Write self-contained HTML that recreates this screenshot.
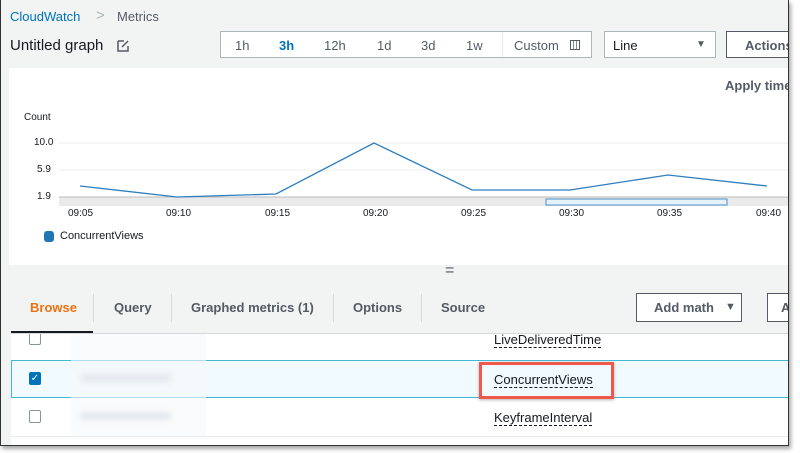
<!DOCTYPE html>
<html><head><style>
body{margin:0;width:800px;height:453px;background:#fff;font-family:"Liberation Sans",sans-serif;position:relative;overflow:hidden}
.frame{position:absolute;left:0;top:0;width:787px;height:445px;border:1.5px solid #333;border-top:none;background:#f2f3f3;overflow:hidden;box-shadow:2px 3px 4px rgba(0,0,0,.35)}
.a{position:absolute;white-space:nowrap}
</style></head><body>
<div class="frame">
<div class="a" style="left:9px;top:9px;font-size:13px;color:#0073bb">CloudWatch</div>
<div class="a" style="left:95px;top:7px;font-size:15px;color:#aab7b8">&gt;</div>
<div class="a" style="left:116px;top:9px;font-size:13px;color:#545b64">Metrics</div>
<div class="a" style="left:9px;top:37px;font-size:15px;color:#16191f">Untitled graph</div>
<svg class="a" style="left:116px;top:39px" width="13" height="13"><path d="M1 2h6M1 2v10h10V7" stroke="#545b64" stroke-width="1.5" fill="none"/><path d="M5 8l6-6" stroke="#545b64" stroke-width="1.5"/></svg>
<div class="a" style="left:219px;top:31px;width:372px;height:27px;background:#fff;border:1px solid #aab7b8;box-sizing:border-box"></div>
<div class="a" style="left:234px;top:38px;font-size:13px;color:#545b64">1h</div>
<div class="a" style="left:278px;top:38px;font-size:13px;color:#0073bb;font-weight:bold">3h</div>
<div class="a" style="left:323px;top:38px;font-size:13px;color:#545b64">12h</div>
<div class="a" style="left:376px;top:38px;font-size:13px;color:#545b64">1d</div>
<div class="a" style="left:420px;top:38px;font-size:13px;color:#545b64">3d</div>
<div class="a" style="left:465px;top:38px;font-size:13px;color:#545b64">1w</div>
<div class="a" style="left:501px;top:32px;width:1px;height:25px;background:#eaeded"></div>
<div class="a" style="left:513px;top:38px;font-size:13px;color:#545b64">Custom</div>
<div class="a" style="left:569px;top:40px;width:10px;height:10px;border:1px solid #545b64;box-sizing:border-box;background:repeating-linear-gradient(90deg,#fff 0 2px,#888 2px 3px)"></div>
<div class="a" style="left:603px;top:31px;width:112px;height:27px;background:#fff;border:1px solid #aab7b8;box-sizing:border-box"></div>
<div class="a" style="left:612px;top:38px;font-size:13px;color:#16191f">Line</div>
<div class="a" style="left:695px;top:39px;font-size:10px;color:#545b64">▼</div>
<div class="a" style="left:725px;top:31px;width:80px;height:27px;background:#fff;border:1px solid #545b64;box-sizing:border-box"></div>
<div class="a" style="left:744px;top:38px;font-size:13px;color:#545b64;font-weight:bold">Actions</div>
<div class="a" style="left:8px;top:68px;width:790px;height:197px;background:#fff"></div>
<div class="a" style="left:724px;top:78px;font-size:13px;color:#545b64;font-weight:bold">Apply time</div>
<div class="a" style="left:23px;top:112px;font-size:10px;color:#16191f">Count</div>
<div class="a" style="left:33px;top:137px;font-size:10px;color:#16191f">10.0</div>
<div class="a" style="left:36px;top:164px;font-size:10px;color:#16191f">5.9</div>
<div class="a" style="left:36px;top:191px;font-size:10px;color:#16191f">1.9</div>
<svg class="a" style="left:0;top:0" width="800" height="260">
<line x1="58" y1="143" x2="790" y2="143" stroke="#eee"/>
<line x1="58" y1="170" x2="790" y2="170" stroke="#eee"/>
<rect x="58" y="197" width="732" height="9" fill="#eaeaea"/>
<line x1="58" y1="197" x2="790" y2="197" stroke="#bbb"/>
<rect x="545" y="199" width="181" height="6" fill="#e6f3fc" stroke="#4a90c8"/>
<polyline points="79,186 176,197 275,194 373,143 471,190 569,190 667,175 766,186" fill="none" stroke="#2e7fc0" stroke-width="1.3"/>
</svg>
<div class="a" style="left:67px;top:208px;font-size:10px;color:#16191f">09:05</div>
<div class="a" style="left:165px;top:208px;font-size:10px;color:#16191f">09:10</div>
<div class="a" style="left:264px;top:208px;font-size:10px;color:#16191f">09:15</div>
<div class="a" style="left:362px;top:208px;font-size:10px;color:#16191f">09:20</div>
<div class="a" style="left:460px;top:208px;font-size:10px;color:#16191f">09:25</div>
<div class="a" style="left:558px;top:208px;font-size:10px;color:#16191f">09:30</div>
<div class="a" style="left:656px;top:208px;font-size:10px;color:#16191f">09:35</div>
<div class="a" style="left:755px;top:208px;font-size:10px;color:#16191f">09:40</div>
<div class="a" style="left:43px;top:231px;width:10px;height:11px;border-radius:3px;background:#1f77b4"></div>
<div class="a" style="left:59px;top:230px;font-size:11px;color:#16191f">ConcurrentViews</div>
<div class="a" style="left:444px;top:262px;font-size:16px;color:#545b64">=</div>
<div class="a" style="left:29px;top:300px;font-size:13px;color:#ec7211;font-weight:bold">Browse</div>
<div class="a" style="left:10px;top:331px;width:82px;height:2px;background:#16191f"></div>
<div class="a" style="left:10px;top:333px;width:790px;height:1px;background:#d5dbdb"></div>
<div class="a" style="left:92px;top:294px;width:1px;height:28px;background:#d5dbdb"></div>
<div class="a" style="left:113px;top:300px;font-size:13px;color:#545b64;font-weight:bold">Query</div>
<div class="a" style="left:170px;top:294px;width:1px;height:28px;background:#d5dbdb"></div>
<div class="a" style="left:190px;top:300px;font-size:13px;color:#545b64;font-weight:bold">Graphed metrics (1)</div>
<div class="a" style="left:332px;top:294px;width:1px;height:28px;background:#d5dbdb"></div>
<div class="a" style="left:352px;top:300px;font-size:13px;color:#545b64;font-weight:bold">Options</div>
<div class="a" style="left:420px;top:294px;width:1px;height:28px;background:#d5dbdb"></div>
<div class="a" style="left:440px;top:300px;font-size:13px;color:#545b64;font-weight:bold">Source</div>
<div class="a" style="left:635px;top:293px;width:106px;height:29px;background:#fff;border:1px solid #545b64;box-sizing:border-box"></div>
<div class="a" style="left:653px;top:300px;font-size:13px;color:#545b64;font-weight:bold">Add math</div>
<div class="a" style="left:724px;top:301px;font-size:11px;color:#545b64">▼</div>
<div class="a" style="left:766px;top:293px;width:40px;height:29px;background:#fff;border:1px solid #545b64;box-sizing:border-box"></div>
<div class="a" style="left:780px;top:300px;font-size:13px;color:#545b64;font-weight:bold">A</div>
<div class="a" style="left:10px;top:334px;width:790px;height:112px;background:#fff"></div>
<div class="a" style="left:10px;top:360px;width:790px;height:38px;background:#f1faff;border:1px solid #44b9d6;box-sizing:border-box"></div>
<div class="a" style="left:10px;top:436px;width:790px;height:1px;background:#eaeded"></div>
<div class="a" style="left:70px;top:334px;width:135px;height:102px;background:#f6f8fa;opacity:.6"></div>
<div class="a" style="left:80px;top:374px;width:90px;height:8px;background:#e3e8ee;filter:blur(3px)"></div>
<div class="a" style="left:80px;top:412px;width:90px;height:8px;background:#e3e8ee;filter:blur(3px)"></div>
<div class="a" style="left:28px;top:334px;width:12px;height:11px;border:1px solid #879596;border-top:none;border-radius:0 0 2px 2px;box-sizing:border-box"></div>
<div class="a" style="left:28px;top:372px;width:12px;height:13px;background:#0073bb;border-radius:2px;color:#fff;font-size:10px;line-height:13px;text-align:center">✓</div>
<div class="a" style="left:28px;top:410px;width:12px;height:13px;border:1px solid #879596;border-radius:2px;box-sizing:border-box"></div>
<div class="a" style="left:493px;top:333px;font-size:13px;color:#16191f;border-bottom:1px dashed #16191f;line-height:14px">LiveDeliveredTime</div>
<div class="a" style="left:478px;top:362px;width:135px;height:37px;border:3px solid #f0584a;box-sizing:border-box;box-shadow:0 1px 3px rgba(0,0,0,.3)"></div>
<div class="a" style="left:493px;top:372px;font-size:13px;color:#16191f;border-bottom:1px dashed #16191f;line-height:15px">ConcurrentViews</div>
<div class="a" style="left:493px;top:410px;font-size:13px;color:#16191f;border-bottom:1px dashed #16191f;line-height:15px">KeyframeInterval</div>
</div>
</body></html>
